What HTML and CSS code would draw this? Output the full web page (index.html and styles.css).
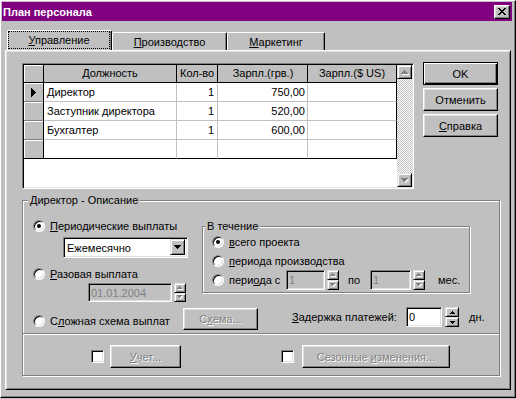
FILE: index.html
```html
<html>
<head>
<title>План персонала</title>
<link rel="stylesheet" href="styles.css">
</head>
<body>
<div class="window">
    <div class="titlebar">
	<span class="title">План персонала</span>
	<span class="close_btn">
	    <svg width="8" height="7" viewBox="0 0 8 7" shape-rendering="crispEdges"><path d="M0 0h2v1h-2zM6 0h2v1h-2zM1 1h2v1h-2zM5 1h2v1h-2zM2 2h4v1h-4zM3 3h2v1h-2zM2 4h4v1h-4zM1 5h2v1h-2zM5 5h2v1h-2zM0 6h2v1h-2zM6 6h2v1h-2z"/></svg>
	</span>
    </div>

    <div class="tabs">
	<div class="tab tab_active"><span class="tab_focus"><span><u>У</u>правление</span></span></div>
	<div class="tab tab_prod"><span><u>П</u>роизводство</span></div>
	<div class="tab tab_mark"><span><u>М</u>аркетинг</span></div>
    </div>

    <div class="panel">
	<div class="top_row">
	    <div class="grid">
		<div class="grid_table">
		    <div class="grow grow_head">
			<div class="gc c_ind"></div>
			<div class="gc c_name">Должность</div>
			<div class="gc c_qty">Кол-во</div>
			<div class="gc c_uah">Зарпл.(грв.)</div>
			<div class="gc c_usd">Зарпл.($ US)</div>
		    </div>
		    <div class="grow">
			<div class="gc c_ind">
			    <svg width="5" height="9" viewBox="0 0 5 9" shape-rendering="crispEdges"><path d="M0 0h1v1h1v1h1v1h1v1h1v1h-1v1h-1v1h-1v1h-1v1h-1z"/></svg>
			</div>
			<div class="gc c_name">Директор</div>
			<div class="gc c_qty">1</div>
			<div class="gc c_uah">750,00</div>
			<div class="gc c_usd"></div>
		    </div>
		    <div class="grow">
			<div class="gc c_ind"></div>
			<div class="gc c_name">Заступник директора</div>
			<div class="gc c_qty">1</div>
			<div class="gc c_uah">520,00</div>
			<div class="gc c_usd"></div>
		    </div>
		    <div class="grow">
			<div class="gc c_ind"></div>
			<div class="gc c_name">Бухгалтер</div>
			<div class="gc c_qty">1</div>
			<div class="gc c_uah">600,00</div>
			<div class="gc c_usd"></div>
		    </div>
		    <div class="grow grow_last">
			<div class="gc c_ind"></div>
			<div class="gc c_name"></div>
			<div class="gc c_qty"></div>
			<div class="gc c_uah"></div>
			<div class="gc c_usd"></div>
		    </div>
		</div>
		<div class="vscroll">
		    <div class="sbtn">
			<svg width="8" height="5" viewBox="0 0 8 5" shape-rendering="crispEdges"><path fill="#fff" transform="translate(1,1)" d="M3 0h1v1h1v1h1v1h1v1h-7v-1h1v-1h1v-1h1z"/><path fill="#808080" d="M3 0h1v1h1v1h1v1h1v1h-7v-1h1v-1h1v-1h1z"/></svg>
		    </div>
		    <div class="strack"></div>
		    <div class="sbtn">
			<svg width="8" height="5" viewBox="0 0 8 5" shape-rendering="crispEdges"><path fill="#fff" transform="translate(1,1)" d="M0 0h7v1h-1v1h-1v1h-1v1h-1v-1h-1v-1h-1v-1h-1z"/><path fill="#808080" d="M0 0h7v1h-1v1h-1v1h-1v1h-1v-1h-1v-1h-1v-1h-1z"/></svg>
		    </div>
		</div>
	    </div>
	    <div class="side_buttons">
		<div class="btn btn_default"><span>OK</span></div>
		<div class="btn"><span>Отменить</span></div>
		<div class="btn"><span><u>С</u>правка</span></div>
	    </div>
	</div>

	<div class="group main_group">
	    <div class="group_title">Директор - Описание</div>
	    <div class="pay_row">
		<div class="pay_left">
		    <div class="radio_row"><span class="radio radio_on"></span><span><u>П</u>ериодические выплаты</span></div>
		    <div class="combo">
			<span class="combo_text">Ежемесячно</span>
			<span class="combo_btn">
			    <svg width="7" height="4" viewBox="0 0 7 4" shape-rendering="crispEdges"><path d="M0 0h7v1h-1v1h-1v1h-1v1h-1v-1h-1v-1h-1v-1h-1z"/></svg>
			</span>
		    </div>
		    <div class="radio_row once_row"><span class="radio"></span><span><u>Р</u>азовая выплата</span></div>
		    <div class="date_row">
			<div class="field field_dis date_field">01.01.2004</div>
			<div class="spin spin_dis">
			    <div class="spin_btn"><svg width="6" height="4" viewBox="0 0 6 4" shape-rendering="crispEdges"><path fill="#fff" transform="translate(1,1)" d="M2 0h1v1h1v1h1v1h-5v-1h1v-1h1z"/><path fill="#808080" d="M2 0h1v1h1v1h1v1h-5v-1h1v-1h1z"/></svg></div>
			    <div class="spin_btn"><svg width="6" height="4" viewBox="0 0 6 4" shape-rendering="crispEdges"><path fill="#fff" transform="translate(1,1)" d="M0 0h5v1h-1v1h-1v1h-1v-1h-1v-1h-1z"/><path fill="#808080" d="M0 0h5v1h-1v1h-1v1h-1v-1h-1v-1h-1z"/></svg></div>
			</div>
		    </div>
		</div>

		<div class="group inner_group">
		    <div class="group_title inner_title">В течение</div>
		    <div class="radio_row ir1"><span class="radio radio_on"></span><span><u>в</u>сего проекта</span></div>
		    <div class="radio_row ir2"><span class="radio"></span><span><u>п</u>ериода производства</span></div>
		    <div class="ir3">
			<span class="radio"></span>
			<span class="per_label">пери<u>о</u>да с</span>
			<div class="field field_dis small_field">1</div>
			<div class="spin spin_dis spin_small">
			    <div class="spin_btn"><svg width="6" height="4" viewBox="0 0 6 4" shape-rendering="crispEdges"><path fill="#fff" transform="translate(1,1)" d="M2 0h1v1h1v1h1v1h-5v-1h1v-1h1z"/><path fill="#808080" d="M2 0h1v1h1v1h1v1h-5v-1h1v-1h1z"/></svg></div>
			    <div class="spin_btn"><svg width="6" height="4" viewBox="0 0 6 4" shape-rendering="crispEdges"><path fill="#fff" transform="translate(1,1)" d="M0 0h5v1h-1v1h-1v1h-1v-1h-1v-1h-1z"/><path fill="#808080" d="M0 0h5v1h-1v1h-1v1h-1v-1h-1v-1h-1z"/></svg></div>
			</div>
			<span class="po_label">по</span>
			<div class="field field_dis small_field2">1</div>
			<div class="spin spin_dis spin_small">
			    <div class="spin_btn"><svg width="6" height="4" viewBox="0 0 6 4" shape-rendering="crispEdges"><path fill="#fff" transform="translate(1,1)" d="M2 0h1v1h1v1h1v1h-5v-1h1v-1h1z"/><path fill="#808080" d="M2 0h1v1h1v1h1v1h-5v-1h1v-1h1z"/></svg></div>
			    <div class="spin_btn"><svg width="6" height="4" viewBox="0 0 6 4" shape-rendering="crispEdges"><path fill="#fff" transform="translate(1,1)" d="M0 0h5v1h-1v1h-1v1h-1v-1h-1v-1h-1z"/><path fill="#808080" d="M0 0h5v1h-1v1h-1v1h-1v-1h-1v-1h-1z"/></svg></div>
			</div>
			<span class="mes_label">мес.</span>
		    </div>
		</div>
	    </div>

	    <div class="scheme_row">
		<div class="radio_row scheme_radio"><span class="radio"></span><span>С<u>л</u>ожная схема выплат</span></div>
		<div class="btn btn_dis scheme_btn"><span>С<u>х</u>ема...</span></div>
		<div class="delay">
		    <span class="delay_label"><u>З</u>адержка платежей:</span>
		    <div class="field delay_field">0</div>
		    <div class="spin spin_delay">
			<div class="spin_btn"><svg width="5" height="3" viewBox="0 0 5 3" shape-rendering="crispEdges"><path d="M2 0h1v1h1v1h1v1h-5v-1h1v-1h1z"/></svg></div>
			<div class="spin_btn"><svg width="5" height="3" viewBox="0 0 5 3" shape-rendering="crispEdges"><path d="M0 0h5v1h-1v1h-1v1h-1v-1h-1v-1h-1z"/></svg></div>
		    </div>
		    <span class="days_label">дн.</span>
		</div>
	    </div>

	    <div class="sep"></div>

	    <div class="check_row">
		<span class="check"></span>
		<div class="btn btn_dis uchet_btn"><span><u>У</u>чет...</span></div>
		<span class="check check2"></span>
		<div class="btn btn_dis season_btn"><span>Сезонные <u>и</u>зменения...</span></div>
	    </div>
	</div>
    </div>
</div>
</body>
</html>
```

FILE: styles.css
```css
body {
    margin: 0;
    background-color: #C0C0C0;
    font-family: "Liberation Sans", Arial, sans-serif;
    font-size: 11px;
    color: #000000;
}

u {
    text-underline-offset: 1px;
}

.window {
    width: 516px;
    height: 398px;
    box-sizing: border-box;
    border-top: 1px solid #FFFFFF;
    border-left: 1px solid #FFFFFF;
    border-right: 1px solid #000000;
    border-bottom: 1px solid #000000;
    box-shadow: inset -1px -1px #808080;
    padding: 1px 3px 1px 1px;
    display: flex;
    flex-direction: column;
}

/* title bar */
.titlebar {
    height: 19px;
    background-color: #800080;
    display: flex;
    align-items: center;
    justify-content: space-between;
    padding: 0 2px 0 1px;
}
.title {
    color: #FFFFFF;
    font-weight: 700;
}
.close_btn {
    width: 16px;
    height: 14px;
    box-sizing: border-box;
    background-color: #C0C0C0;
    border: 1px solid;
    border-color: #FFFFFF #000000 #000000 #FFFFFF;
    box-shadow: inset -1px -1px #808080, inset 1px 1px #DFDFDF;
    display: flex;
    align-items: center;
    justify-content: center;
}
.close_btn svg {
    display: block;
}

/* tabs */
.tabs {
    display: flex;
    align-items: flex-end;
    height: 20px;
    margin: 9px 0 0 5px;
}
.tab {
    box-sizing: border-box;
    height: 18px;
    border-top: 1px solid #FFFFFF;
    border-left: 1px solid #FFFFFF;
    border-right: 1px solid #000000;
    box-shadow: inset -1px 0 #808080;
    border-radius: 2px 2px 0 0;
    display: flex;
    align-items: center;
    justify-content: center;
}
.tab_active {
    width: 105px;
    height: 20px;
    padding: 0 1px 1px 0;
    align-items: stretch;
}
.tab_focus {
    flex: 1;
    border: 1px dotted #000000;
    display: flex;
    align-items: center;
    justify-content: center;
}
.tab_prod {
    width: 115px;
}
.tab_mark {
    width: 98px;
}

/* tab page */
.panel {
    margin: 0 1px 0 3px;
    height: 340px;
    box-sizing: border-box;
    border-top: 1px solid #FFFFFF;
    border-left: 1px solid #FFFFFF;
    border-right: 1px solid #000000;
    border-bottom: 1px solid #000000;
    box-shadow: inset 1px 1px #DFDFDF, inset -1px -1px #808080;
    padding: 11px 0 0 16px;
}
.top_row {
    display: flex;
    align-items: flex-start;
}

/* data grid */
.grid {
    width: 392px;
    height: 126px;
    box-sizing: border-box;
    margin-top: 1px;
    padding: 1px;
    border: 1px solid;
    border-color: #808080 #FFFFFF #FFFFFF #808080;
    box-shadow: inset 1px 1px #000000, inset -1px -1px #DFDFDF;
    background-color: #FFFFFF;
    display: flex;
}
.grid_table {
    width: 373px;
}
.grow {
    display: flex;
    height: 19px;
}
.grow_head {
    height: 18px;
}
.gc {
    box-sizing: border-box;
    border-right: 1px solid #C0C0C0;
    border-bottom: 1px solid #C0C0C0;
    padding: 0 3px;
    line-height: 18px;
    white-space: nowrap;
    overflow: hidden;
}
.grow_head .gc {
    background-color: #C0C0C0;
    border-color: #000000;
    text-align: center;
    line-height: 16px;
}
.c_ind {
    width: 20px;
    background-color: #C0C0C0;
    border-right-color: #000000;
    border-bottom-color: #808080;
    box-shadow: inset 1px 1px #FFFFFF;
    display: flex;
    align-items: center;
    justify-content: center;
    padding: 0;
}
.c_name {
    width: 133px;
}
.c_qty {
    width: 41px;
    text-align: right;
}
.c_uah {
    width: 90px;
    text-align: right;
    padding-right: 2px;
}
.c_usd {
    width: 89px;
    border-right-color: #000000;
}
.grow_last .gc {
    border-bottom-color: #000000;
}

.vscroll {
    width: 15px;
    display: flex;
    flex-direction: column;
}
.sbtn {
    height: 14px;
    box-sizing: border-box;
    border: 1px solid;
    border-color: #DFDFDF #000000 #000000 #DFDFDF;
    box-shadow: inset 1px 1px #FFFFFF, inset -1px -1px #808080;
    background-color: #C0C0C0;
    display: flex;
    align-items: center;
    justify-content: center;
}
.strack {
    flex: 1;
    background: repeating-conic-gradient(#FFFFFF 0 25%, #C0C0C0 0 50%) 0 0 / 2px 2px;
}

/* buttons */
.side_buttons {
    margin-left: 9px;
    display: flex;
    flex-direction: column;
    gap: 3px;
}
.btn {
    width: 75px;
    height: 23px;
    box-sizing: border-box;
    border: 1px solid;
    border-color: #FFFFFF #000000 #000000 #FFFFFF;
    box-shadow: inset -1px -1px #808080, inset 1px 1px #DFDFDF;
    background-color: #C0C0C0;
    display: flex;
    align-items: center;
    justify-content: center;
    white-space: nowrap;
}
.btn_default {
    border-color: #000000;
    box-shadow: inset 1px 1px #FFFFFF, inset -1px -1px #000000, inset -2px -2px #808080;
}
.btn_dis {
    color: #808080;
    text-shadow: 1px 1px #FFFFFF;
}

/* group boxes */
.group {
    box-sizing: border-box;
    border: 1px solid #808080;
    box-shadow: inset 1px 1px #FFFFFF, 1px 1px #FFFFFF;
    display: flex;
    flex-direction: column;
}
.main_group {
    margin-top: 11px;
    width: 478px;
    height: 176px;
}
.group_title {
    align-self: flex-start;
    margin: -7px 0 -6px 5px;
    padding: 0 2px;
    line-height: 13px;
    background-color: #C0C0C0;
}
.inner_title {
    margin-left: 2px;
}

.pay_row {
    display: flex;
    align-items: flex-start;
    padding-left: 10px;
}
.pay_left {
    width: 169px;
    margin-top: 18px;
}
.radio_row {
    display: flex;
    align-items: center;
    height: 13px;
    white-space: nowrap;
}
.radio {
    flex: none;
    position: relative;
    width: 12px;
    height: 12px;
    box-sizing: border-box;
    margin-right: 5px;
    border-radius: 50%;
    background-color: #FFFFFF;
    border: 1px solid;
    border-color: #808080 #FFFFFF #FFFFFF #808080;
    box-shadow: inset 1px 1px #000000, inset -1px -1px #DFDFDF;
}
.radio_on::after {
    content: "";
    position: absolute;
    left: 3px;
    top: 3px;
    width: 4px;
    height: 4px;
    border-radius: 50%;
    background-color: #000000;
}

/* edit fields */
.field {
    box-sizing: border-box;
    border: 1px solid;
    border-color: #808080 #FFFFFF #FFFFFF #808080;
    box-shadow: inset 1px 1px #000000, inset -1px -1px #DFDFDF;
    background-color: #FFFFFF;
    padding-left: 2px;
    display: flex;
    align-items: center;
    white-space: nowrap;
}
.field_dis {
    background-color: #C0C0C0;
    color: #808080;
}

.combo {
    margin: 5px 0 0 30px;
    width: 125px;
    height: 21px;
    box-sizing: border-box;
    border: 1px solid;
    border-color: #808080 #FFFFFF #FFFFFF #808080;
    box-shadow: inset 1px 1px #000000, inset -1px -1px #DFDFDF;
    background-color: #FFFFFF;
    padding: 1px;
    display: flex;
    align-items: stretch;
}
.combo_text {
    flex: 1;
    padding-left: 2px;
    display: flex;
    align-items: center;
}
.combo_btn {
    width: 15px;
    margin-right: 1px;
    margin-bottom: 1px;
    box-sizing: border-box;
    border: 1px solid;
    border-color: #DFDFDF #000000 #000000 #DFDFDF;
    box-shadow: inset 1px 1px #FFFFFF, inset -1px -1px #808080;
    background-color: #C0C0C0;
    display: flex;
    align-items: center;
    justify-content: center;
}
.once_row {
    margin-top: 9px;
}
.date_row {
    display: flex;
    margin: 3px 0 0 55px;
}
.date_field {
    width: 84px;
    height: 19px;
}

/* spin buttons */
.spin {
    display: flex;
    flex-direction: column;
    margin-left: 2px;
    width: 12px;
    height: 19px;
}
.spin_btn {
    flex: 1;
    box-sizing: border-box;
    border: 1px solid;
    border-color: #DFDFDF #000000 #000000 #DFDFDF;
    box-shadow: inset 1px 1px #FFFFFF, inset -1px -1px #808080;
    background-color: #C0C0C0;
    display: flex;
    align-items: center;
    justify-content: center;
}
.spin_btn svg {
    display: block;
}

/* "in the course of" box */
.inner_group {
    margin-top: 25px;
    width: 268px;
    height: 67px;
}
.inner_group .radio_row,
.ir3 {
    padding-left: 9px;
}
.ir1 {
    margin-top: 8px;
}
.ir2 {
    margin-top: 6px;
}
.ir3 {
    margin-top: 3px;
    height: 20px;
    display: flex;
    align-items: center;
    white-space: nowrap;
}
.per_label {
    width: 57px;
}
.small_field {
    width: 39px;
    height: 20px;
}
.small_field2 {
    width: 41px;
    height: 20px;
}
.spin_small {
    height: 20px;
}
.po_label {
    margin-left: 9px;
    width: 22px;
}
.mes_label {
    margin-left: 13px;
}

/* scheme / delay row */
.scheme_row {
    display: flex;
    align-items: center;
    margin-top: 6px;
    padding-left: 10px;
    height: 22px;
}
.scheme_radio {
    width: 150px;
    margin-top: 3px;
}
.scheme_btn {
    height: 22px;
}
.delay {
    display: flex;
    align-items: center;
    align-self: flex-start;
    margin: -1px 0 0 34px;
    height: 20px;
    white-space: nowrap;
}
.delay_label {
    width: 114px;
}
.delay_field {
    width: 36px;
    height: 20px;
}
.spin_delay {
    margin-left: 3px;
    width: 14px;
    height: 20px;
}
.days_label {
    margin-left: 10px;
}

.sep {
    margin-top: 3px;
    border-top: 1px solid #808080;
    border-bottom: 1px solid #FFFFFF;
}

/* bottom row with check boxes */
.check_row {
    display: flex;
    align-items: center;
    margin-top: 10px;
    height: 23px;
    padding-left: 68px;
}
.check {
    width: 13px;
    height: 13px;
    box-sizing: border-box;
    border: 1px solid;
    border-color: #808080 #FFFFFF #FFFFFF #808080;
    box-shadow: inset 1px 1px #000000, inset -1px -1px #DFDFDF;
    background-color: #FFFFFF;
}
.uchet_btn {
    margin-left: 6px;
    width: 71px;
}
.check2 {
    margin-left: 100px;
}
.season_btn {
    margin-left: 8px;
    width: 148px;
}
```
